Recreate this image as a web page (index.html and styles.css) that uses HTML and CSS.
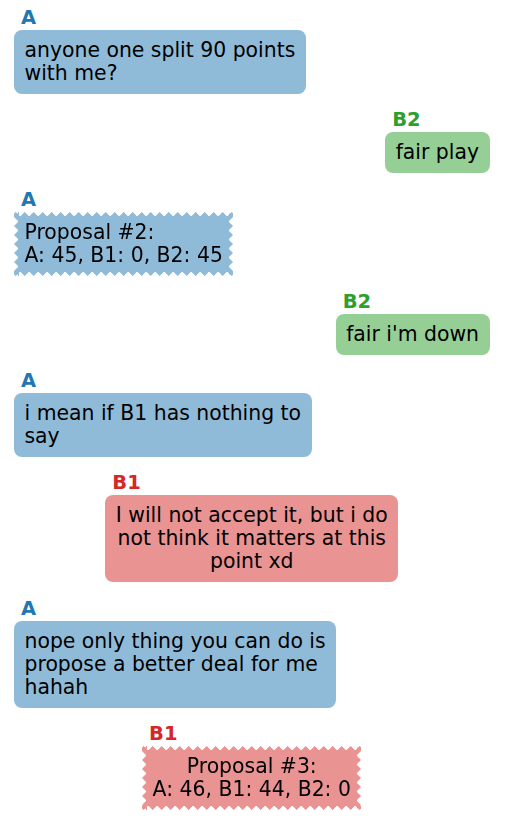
FILE: index.html
```html
<!DOCTYPE html>
<html>
<head>
<meta charset="utf-8">
<link rel="stylesheet" href="styles.css">
</head>
<body>
<div class="chat">
  <div class="msg left a"><div class="label">A</div><div class="bubble">anyone one split 90 points<br>with me?</div></div>
  <div class="msg right b2"><div class="label">B2</div><div class="bubble">fair play</div></div>
  <div class="msg left a"><div class="label">A</div><div class="bubble zig">Proposal #2:<br>A: 45, B1: 0, B2: 45</div></div>
  <div class="msg right b2"><div class="label">B2</div><div class="bubble">fair i'm down</div></div>
  <div class="msg left a"><div class="label">A</div><div class="bubble">i mean if B1 has nothing to<br>say</div></div>
  <div class="msg center b1"><div class="label">B1</div><div class="bubble">I will not accept it, but i do<br>not think it matters at this<br>point xd</div></div>
  <div class="msg left a"><div class="label">A</div><div class="bubble">nope only thing you can do is<br>propose a better deal for me<br>hahah</div></div>
  <div class="msg center b1"><div class="label">B1</div><div class="bubble zig">Proposal #3:<br>A: 46, B1: 44, B2: 0</div></div>
</div>
</body>
</html>
```
FILE: styles.css
```css
html, body {
  margin: 0;
  background: #ffffff;
}
body {
  font-family: "DejaVu Sans", sans-serif;
}
.chat {
  width: 506px;
  box-sizing: border-box;
  padding: 7px 16.5px 0 14px;
  display: flex;
  flex-direction: column;
  gap: 15.3px;
}
.msg {
  display: flex;
  flex-direction: column;
  align-items: flex-start;
}
.left { align-self: flex-start; }
.right { align-self: flex-end; }
.center { align-self: center; }

.label {
  font-weight: bold;
  font-size: 19.5px;
  line-height: 21px;
  padding-left: 7px;
  margin-bottom: 2px;
}
.a .label { color: #1f77b4; }
.b2 .label { color: #2ca02c; }
.b1 .label { color: #d62728; }

.bubble {
  font-size: 20.4px;
  line-height: 23px;
  padding: 9px 10.5px;
  border-radius: 8px;
  white-space: nowrap;
  color: #000000;
}
.a .bubble { background: #8fbbd9; }
.b2 .bubble { background: #96cf96; }
.b1 .bubble { background: #ea9393; }
.center .bubble { text-align: center; }

.zig {
  border-radius: 0;
  -webkit-mask:
    linear-gradient(#000 0 0) center / calc(100% - 9px) calc(100% - 9px) no-repeat,
    conic-gradient(from 135deg at 50% 0, #000 90deg, #0000 0) top / 9px 4.5px repeat-x,
    conic-gradient(from -45deg at 50% 100%, #000 90deg, #0000 0) bottom / 9px 4.5px repeat-x,
    conic-gradient(from 45deg at 0 50%, #000 90deg, #0000 0) left / 4.5px 9px repeat-y,
    conic-gradient(from 225deg at 100% 50%, #000 90deg, #0000 0) right / 4.5px 9px repeat-y;
  mask:
    linear-gradient(#000 0 0) center / calc(100% - 9px) calc(100% - 9px) no-repeat,
    conic-gradient(from 135deg at 50% 0, #000 90deg, #0000 0) top / 9px 4.5px repeat-x,
    conic-gradient(from -45deg at 50% 100%, #000 90deg, #0000 0) bottom / 9px 4.5px repeat-x,
    conic-gradient(from 45deg at 0 50%, #000 90deg, #0000 0) left / 4.5px 9px repeat-y,
    conic-gradient(from 225deg at 100% 50%, #000 90deg, #0000 0) right / 4.5px 9px repeat-y;
}
```
